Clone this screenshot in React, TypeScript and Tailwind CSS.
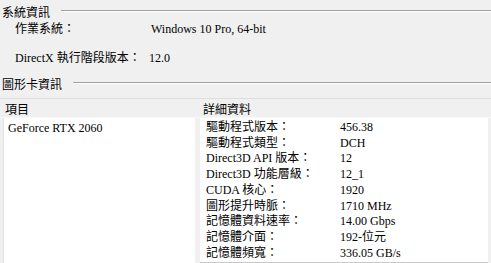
const font = {
  fontFamily: '"Liberation Serif", "Noto Sans CJK TC", serif',
};

const details = [
  ["驅動程式版本：", "456.38"],
  ["驅動程式類型：", "DCH"],
  ["Direct3D API 版本：", "12"],
  ["Direct3D 功能層級：", "12_1"],
  ["CUDA 核心：", "1920"],
  ["圖形提升時脈：", "1710 MHz"],
  ["記憶體資料速率：", "14.00 Gbps"],
  ["記憶體介面：", "192-位元"],
  ["記憶體頻寬：", "336.05 GB/s"],
];

function SectionTitle({ title }: { title: string }) {
  return (
    <div className="flex h-[22px] items-center pl-[2px]">
      <span className="whitespace-nowrap pt-[4px]">{title}</span>
      <div className="ml-[11px] h-[2px] flex-1 border-t border-b border-t-[#a0a0a0] border-b-white" />
    </div>
  );
}

export default function App() {
  return (
    <div
      className="h-[263px] w-[491px] overflow-hidden bg-[#f0f0f0] text-[12px] leading-[16px] text-black"
      style={font}
    >
      {/* 系統資訊 */}
      <SectionTitle title="系統資訊" />
      <div className="pl-[15px]">
        <div className="-mt-[1px] flex h-[16px] items-center">
          <span className="w-[136px]">作業系統：</span>
          <span>Windows 10 Pro, 64-bit</span>
        </div>
        <div className="mt-[13px] flex h-[16px] items-center">
          <span className="w-[134px] whitespace-nowrap">DirectX 執行階段版本：</span>
          <span>12.0</span>
        </div>
      </div>

      {/* 圖形卡資訊 */}
      <div className="mt-[6px]">
        <SectionTitle title="圖形卡資訊" />
      </div>

      <div className="mt-[4px] flex h-[19px] items-center border-t border-[#dedede]">
        <span className="w-[198px] pl-[5px] pt-[3px]">項目</span>
        <span className="pl-[5px] pt-[3px]">詳細資料</span>
      </div>

      <div className="flex h-[146px] gap-[5px] border-t border-[#f8f8f8]">
        <div className="ml-[3px] w-[192px] border-l border-[#e2e2e2] bg-white pl-[4px] pt-[2px]">
          GeForce RTX 2060
        </div>
        <div className="w-[288px] border-b border-[#c8c8c8] bg-white pl-[6px] pt-[1px]">
          {details.map(([label, value]) => (
            <div key={label} className="flex h-[15.75px] items-center whitespace-nowrap">
              <span className="w-[134px]">{label}</span>
              <span>{value}</span>
            </div>
          ))}
        </div>
      </div>
    </div>
  );
}
